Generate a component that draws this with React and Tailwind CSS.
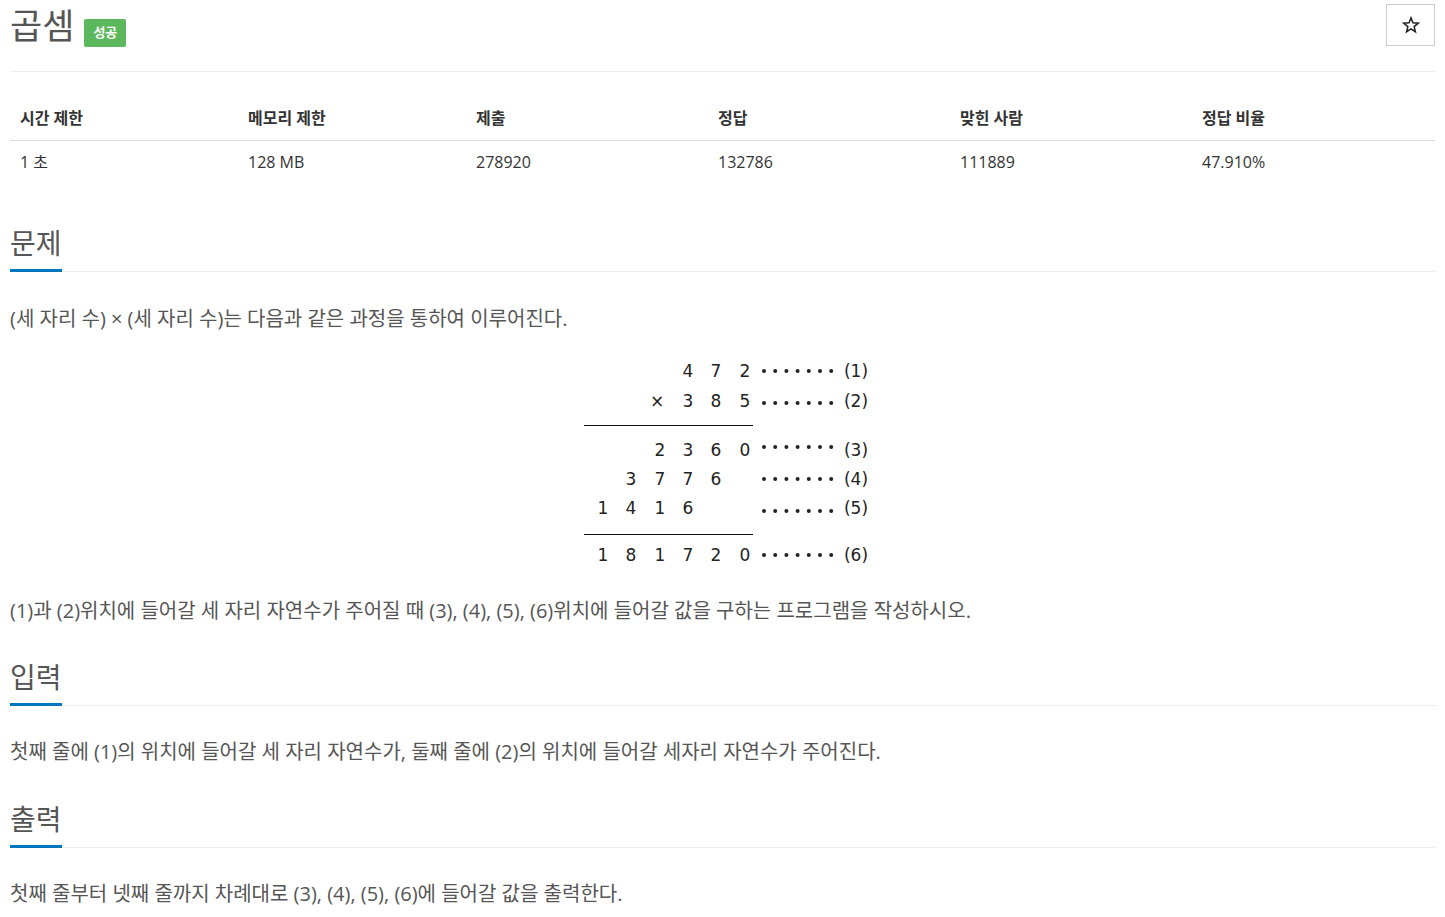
import React from 'react';

const FONT = { fontFamily: '"Open Sans", "Noto Sans CJK KR", sans-serif' };

const stats = [
  { label: '시간 제한', value: '1 초', w: 'w-[228px]' },
  { label: '메모리 제한', value: '128 MB', w: 'w-[228px]' },
  { label: '제출', value: '278920', w: 'w-[242px]' },
  { label: '정답', value: '132786', w: 'w-[242px]' },
  { label: '맞힌 사람', value: '111889', w: 'w-[242px]' },
  { label: '정답 비율', value: '47.910%', w: '' },
];

const Headline = ({ children }) => (
  <div className="border-b border-dotted border-[#ddd]">
    <span className="inline-block text-[28px] leading-[31px] pb-[10px] border-b-[3px] border-[#0076c0] -mb-px text-[#555]">
      {children}
    </span>
  </div>
);

// multiplication figure (an image on the original page)
const Figure = () => {
  const ox = 577;
  const oy = 334;
  const rows = [
    { y: 371, cells: [[688, '4'], [716, '7'], [745, '2']], dots: 371, tag: '(1)' },
    { y: 401, cells: [[657, '×'], [688, '3'], [716, '8'], [745, '5']], dots: 403, tag: '(2)' },
    { y: 450, cells: [[660, '2'], [688, '3'], [716, '6'], [745, '0']], dots: 447, tag: '(3)' },
    { y: 479, cells: [[631, '3'], [660, '7'], [688, '7'], [716, '6']], dots: 479, tag: '(4)' },
    { y: 508, cells: [[603, '1'], [631, '4'], [660, '1'], [688, '6']], dots: 511, tag: '(5)' },
    { y: 555, cells: [[603, '1'], [631, '8'], [660, '1'], [688, '7'], [716, '2'], [745, '0']], dots: 555, tag: '(6)' },
  ];
  return (
    <svg width="292" height="262" viewBox="0 0 292 262" className="block mx-auto">
      <g fill="#222" fontSize="17" style={{ fontFamily: '"DejaVu Sans", sans-serif' }}>
        {rows.map((r, i) => (
          <g key={i}>
            {r.cells.map(([x, t], j) => (
              <text key={j} x={x - ox} y={r.y - oy + 6} textAnchor="middle">{t}</text>
            ))}
            {[0, 1, 2, 3, 4, 5, 6].map((k) => (
              <circle key={k} cx={764 + k * 11.2 - ox} cy={r.dots - oy} r="2" />
            ))}
            <text x={856 - ox} y={r.y - oy + 6} textAnchor="middle">{r.tag}</text>
          </g>
        ))}
      </g>
      <line x1={584 - ox} x2={753 - ox} y1={425.5 - oy} y2={425.5 - oy} stroke="#111" strokeWidth="1.2" />
      <line x1={584 - ox} x2={753 - ox} y1={534.5 - oy} y2={534.5 - oy} stroke="#111" strokeWidth="1.2" />
    </svg>
  );
};

export default function App() {
  return (
    <div className="px-[10px] bg-white min-h-[917px] text-[#333]" style={FONT}>
      {/* title */}
      <div className="h-[72px] flex justify-between items-start border-b border-[#eee]">
        <div className="flex items-start pt-[4px]">
          <h1 className="text-[35px] leading-[44px] text-[#555]">곱셈</h1>
          <span className="ml-[10px] mt-[15px] h-[28px] px-[9px] flex items-center bg-[#5cb85c] text-white text-[13px] font-bold rounded-[2px]">
            성공
          </span>
        </div>
        <button className="mt-[4px] w-[49px] h-[42px] border border-[#ccc] bg-white flex items-center justify-center">
          <svg width="18" height="18" viewBox="0 0 24 24" fill="none" stroke="#222" strokeWidth="2" strokeLinejoin="miter">
            <path d="M12 2.5l2.6 6.6 7 .5-5.4 4.5 1.7 6.9L12 17.2 6.1 21l1.7-6.9L2.4 9.6l7-.5z" />
          </svg>
        </button>
      </div>

      {/* stats */}
      <table className="w-full mt-[28px] text-[16px] border-collapse">
        <thead>
          <tr>
            {stats.map((s) => (
              <th key={s.label} className={`${s.w} text-left font-bold px-[10px] pt-[7px] pb-[11px] leading-[22px] border-b border-[#ddd]`}>
                {s.label}
              </th>
            ))}
          </tr>
        </thead>
        <tbody>
          <tr>
            {stats.map((s) => (
              <td key={s.label} className="px-[10px] py-[10px] leading-[22px] text-[#333]">
                {s.value}
              </td>
            ))}
          </tr>
        </tbody>
      </table>

      {/* problem */}
      <section className="mt-[45px]">
        <Headline>문제</Headline>
        <div className="mt-[32px] text-[20px] leading-[30px] text-[#555]">
          <p>(세 자리 수) × (세 자리 수)는 다음과 같은 과정을 통하여 이루어진다.</p>
          <Figure />
          <p>(1)과 (2)위치에 들어갈 세 자리 자연수가 주어질 때 (3), (4), (5), (6)위치에 들어갈 값을 구하는 프로그램을 작성하시오.</p>
        </div>
      </section>

      <section className="mt-[36px]">
        <Headline>입력</Headline>
        <p className="mt-[31px] text-[20px] leading-[30px] text-[#555]">
          첫째 줄에 (1)의 위치에 들어갈 세 자리 자연수가, 둘째 줄에 (2)의 위치에 들어갈 세자리 자연수가 주어진다.
        </p>
      </section>

      <section className="mt-[37px]">
        <Headline>출력</Headline>
        <p className="mt-[31px] text-[20px] leading-[30px] text-[#555]">
          첫째 줄부터 넷째 줄까지 차례대로 (3), (4), (5), (6)에 들어갈 값을 출력한다.
        </p>
      </section>
    </div>
  );
}
